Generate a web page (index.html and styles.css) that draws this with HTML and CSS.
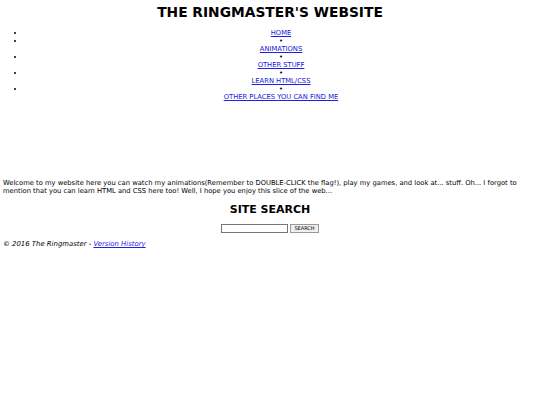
FILE: index.html
```html
<!DOCTYPE html>
<html>
<head>
<meta charset="utf-8">
<link rel="stylesheet" href="styles.css">
</head>
<body>
<h1 class="title">THE RINGMASTER'S WEBSITE</h1>
<ul class="nav">
  <li><a href="#">HOME</a></li>
  <li><a href="#">ANIMATIONS</a></li>
  <li><a href="#">OTHER STUFF</a></li>
  <li><a href="#">LEARN HTML/CSS</a></li>
  <li><a href="#">OTHER PLACES YOU CAN FIND ME</a></li>
</ul>
<div class="banner"></div>
<p class="intro">Welcome to my website here you can watch my animations(Remember to DOUBLE-CLICK the flag!), play my games, and look at... stuff. Oh... I forgot to mention that you can learn HTML and CSS here too! Well, I hope you enjoy this slice of the web...</p>
<h2 class="search-title">SITE SEARCH</h2>
<form class="search">
  <input class="search-input" type="text">
  <button class="search-btn" type="button">SEARCH</button>
</form>
<p class="footer">© 2016 The Ringmaster - <a href="#">Version History</a></p>
</body>
</html>
```
FILE: styles.css
```css
html, body {
  background: #fff;
}
body {
  margin: 0 3px;
  font-family: "DejaVu Sans", Verdana, sans-serif;
  font-size: 6.75px;
  line-height: 8px;
  color: #000;
}
a {
  color: #2020e0;
}
.title {
  margin: 4px 0 0;
  text-align: center;
  font-size: 13.8px;
  line-height: 17px;
  font-weight: bold;
}
.nav {
  margin: 8px 0 0;
  padding-left: 22px;
  text-align: center;
}
.nav li + li::before {
  content: "•";
  display: block;
  line-height: 8px;
}
.banner {
  height: 74px;
}
.intro {
  margin: 4px 0 0;
}
.search-title {
  margin: 8px 0 0;
  text-align: center;
  font-size: 11px;
  line-height: 14px;
}
.search {
  margin: 7px 0 0;
  display: flex;
  justify-content: center;
  gap: 2px;
}
.search-input {
  width: 63px;
  height: 7px;
  margin: 0;
  padding: 0 1px;
  border: 1px solid #767676;
  font-size: 5px;
}
.search-btn {
  margin: 0;
  padding: 0 3px;
  height: 9px;
  font-family: "DejaVu Sans", sans-serif;
  font-size: 5px;
  line-height: 7px;
  border: 1px solid #999;
  background: #efefef;
}
.footer {
  margin: 7px 0 0;
  font-size: 6.9px;
  font-style: italic;
}
```
